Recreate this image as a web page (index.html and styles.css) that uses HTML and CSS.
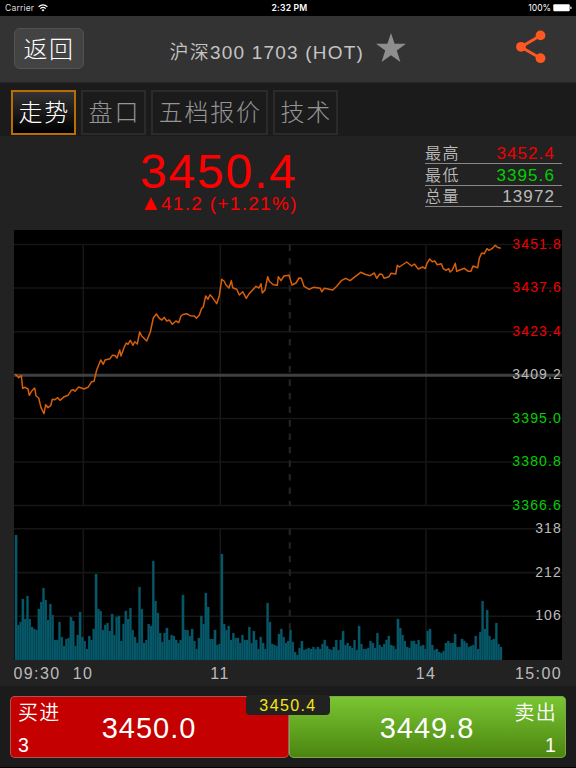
FILE: index.html
```html
<!DOCTYPE html>
<html lang="zh-CN">
<head>
    <meta charset="UTF-8">
    <title>沪深300 1703</title>
    <link rel="stylesheet" href="styles.css">
</head>
<body>
    <!-- Status Bar -->
    <div class="status-bar">
        <div class="status-left">
            <span>Carrier</span>
            <svg class="wifi" width="10" height="8" viewBox="0 0 10 8">
                <path d="M0.6 2.8 Q5 -1.2 9.4 2.8" />
                <path d="M2.3 4.6 Q5 2.2 7.7 4.6" />
                <path class="wifi-dot" d="M3.5 5.9 Q5 4.7 6.5 5.9 L5 7.6 Z" />
            </svg>
        </div>
        <div class="status-time">2:32 PM</div>
        <div class="status-right">
            <span>100%</span>
            <svg width="19" height="8" viewBox="0 0 19 8">
                <rect x="0.3" y="0.3" width="16.4" height="7" rx="1" fill="#fff" />
                <rect x="17.3" y="2.5" width="1.2" height="2.6" rx="0.5" fill="#fff" />
            </svg>
        </div>
    </div>

    <!-- Header -->
    <div class="header">
        <button class="back-btn">返回</button>
        <div class="title">沪深300 1703 (HOT)</div>
        <svg class="star" width="30" height="30" viewBox="0 0 30 30">
            <polygon points="15,0 18.6,10.8 30,10.8 20.8,17.6 24.4,29 15,22.2 5.6,29 9.2,17.6 0,10.8 11.4,10.8" />
        </svg>
        <svg class="share" width="30" height="34" viewBox="0 0 30 34">
            <path d="M24.5 5.5 L5 17 L24.5 28.3" />
            <circle cx="24.5" cy="5.4" r="4.9" />
            <circle cx="5" cy="16.8" r="4.9" />
            <circle cx="24.5" cy="28.2" r="4.9" />
        </svg>
    </div>

    <!-- Tabs -->
    <div class="tabs">
        <div class="tab active">走势</div>
        <div class="tab">盘口</div>
        <div class="tab">五档报价</div>
        <div class="tab">技术</div>
    </div>

    <div class="content">
        <div class="quote">
            <div class="quote-main">
                <div class="last-price">3450.4</div>
                <div class="change">
                    <svg width="14" height="13" viewBox="0 0 14 13"><polygon points="7,0 13.5,13 0.5,13" fill="#f00" /></svg>
                    <span>41.2 (+1.21%)</span>
                </div>
            </div>
            <div class="stats">
                <div class="stat"><span>最高</span><span class="value up">3452.4</span></div>
                <div class="stat"><span>最低</span><span class="value down">3395.6</span></div>
                <div class="stat"><span>总量</span><span class="value">13972</span></div>
            </div>
        </div>

        <svg id="chart" class="chart" width="548" height="456" viewBox="0 0 548 456"></svg>
    </div>

    <!-- Order Buttons -->
    <div class="orders">
        <div class="order buy">
            <span class="order-name">买进</span>
            <span class="order-price">3450.0</span>
            <span class="order-count">3</span>
        </div>
        <div class="order sell">
            <span class="order-name">卖出</span>
            <span class="order-price">3449.8</span>
            <span class="order-count">1</span>
        </div>
        <div class="deal-price">3450.4</div>
    </div>

    <script src="chart.js"></script>
</body>
</html>
```
FILE: styles.css
```css
* {
    box-sizing: border-box;
}
body {
    margin: 0;
    width: 576px;
    height: 768px;
    overflow: hidden;
    background-color: #1b1b1b;
    color: #bbb;
    font-family: "Liberation Sans", "Noto Sans CJK SC", sans-serif;
    display: flex;
    flex-direction: column;
}
/* Status bar */
.status-bar {
    height: 16px;
    flex: none;
    background-color: #000;
    color: #fff;
    display: grid;
    grid-template-columns: 1fr auto 1fr;
    align-items: center;
    padding: 0 4px 0 5px;
    font-family: Inter, sans-serif;
    font-size: 8.6px;
    line-height: 16px;
}
.status-left {
    display: flex;
    align-items: center;
    gap: 4px;
    color: #ddd;
    letter-spacing: 0.15px;
}
.status-time {
    font-weight: 600;
    letter-spacing: 0.2px;
    padding-left: 2px;
}
.status-right {
    display: flex;
    align-items: center;
    justify-content: flex-end;
    gap: 2px;
}
.wifi path {
    fill: none;
    stroke: #fff;
    stroke-width: 1.2;
}
.wifi .wifi-dot {
    fill: #fff;
    stroke: none;
}
/* Header */
.header {
    height: 66px;
    flex: none;
    background-color: #333;
    display: flex;
    align-items: center;
    padding: 0 30px 0 14px;
}
.back-btn {
    width: 70px;
    height: 41px;
    margin-top: -1px;
    padding: 0;
    background-color: #434343;
    border: 1px solid #525252;
    border-radius: 6px;
    color: #fff;
    font-family: inherit;
    font-weight: 300;
    font-size: 24px;
    letter-spacing: 1.5px;
    line-height: 41px;
}
.title {
    margin: 3px 0 0 85.5px;
    width: 206px;
    white-space: nowrap;
    font-size: 19px;
    font-weight: 350;
    letter-spacing: 1.2px;
    color: #c4c4c4;
}
.star {
    fill: #8e8e8e;
    margin-top: -2px;
}
.share {
    margin-left: auto;
    margin-top: -4px;
    fill: #ff5722;
}
.share path {
    fill: none;
    stroke: #ff5722;
    stroke-width: 3;
}
/* Tabs */
.tabs {
    height: 54px;
    flex: none;
    display: flex;
    gap: 5px;
    padding: 7px 11px 0;
    border-top: 1px solid #252525;
}
.tab {
    height: 45px;
    border: 2px solid #2b2b2b;
    padding: 0 4px 0 5.5px;
    font-size: 24px;
    font-weight: 300;
    letter-spacing: 1.8px;
    line-height: 42px;
    color: #959595;
}
.tab.active {
    border-color: #b96d05;
    background: linear-gradient(#333, #000);
    color: #fff;
}
/* Quote */
.content {
    height: 550px;
    flex: none;
    background-color: #222;
    padding: 0 14px;
}
.quote {
    height: 94px;
    display: flex;
    justify-content: space-between;
}
.quote-main {
    padding: 14px 0 0 126px;
    color: #f00;
}
.last-price {
    font-size: 48px;
    line-height: 44px;
    letter-spacing: 1.8px;
}
.change {
    display: flex;
    align-items: center;
    gap: 3px;
    padding-left: 4px;
    font-size: 19px;
    line-height: 19px;
    letter-spacing: 1.3px;
    white-space: nowrap;
}
.stats {
    width: 137px;
    padding-top: 6.5px;
}
.stat {
    display: flex;
    justify-content: space-between;
    align-items: center;
    height: 21.5px;
    padding: 3px 7px 0 0;
    border-bottom: 1px solid #888;
    font-size: 16px;
    font-weight: 350;
    letter-spacing: 1.4px;
    line-height: 18px;
}
.stat .value {
    font-size: 17px;
    letter-spacing: 1.1px;
}
.up {
    color: #f00000;
}
.down {
    color: #00d000;
}
/* Chart */
.chart {
    display: block;
}
.chart .area {
    fill: #000;
}
.chart .grid {
    stroke: #161616;
    stroke-width: 1.6;
    fill: none;
}
.chart .noon {
    stroke: #222;
    stroke-width: 2.2;
    stroke-dasharray: 6.5 7;
}
.chart .base {
    stroke: #404040;
    stroke-width: 3;
}
.chart .price {
    fill: none;
    stroke: #d85f0a;
    stroke-width: 1.5;
    stroke-linejoin: round;
}
.chart .volume {
    fill: #07596a;
    stroke: #044452;
    stroke-width: 0.3;
}
.chart text {
    font-size: 14px;
    letter-spacing: 1.15px;
    fill: #bbb;
}
.chart .label-up {
    fill: #f00000;
}
.chart .label-down {
    fill: #00d000;
}
.chart .label-time {
    font-size: 16px;
    letter-spacing: 1.4px;
}
/* Order buttons */
.orders {
    position: relative;
    flex: 1;
    display: flex;
    padding: 10px 10px 9px;
    border-bottom: 1px solid #000;
}
.order {
    flex: 1;
    display: grid;
    grid-template-columns: 50px 1fr 50px;
    grid-template-rows: 31px 31px;
    height: 62px;
    border-radius: 5px;
    color: #fff;
    font-size: 19.5px;
    line-height: 34px;
    letter-spacing: 1.2px;
}
.buy {
    flex: none;
    width: 279px;
    background-color: #c40000;
    box-shadow: inset 0 0 0 1px #a55;
    padding: 0 9px 0 8px;
}
.sell {
    background: linear-gradient(#7bc733, #4b840f);
    box-shadow: inset 0 0 0 1px #7ba84f;
    padding: 0 9px 0 8px;
    text-align: right;
}
.order-name {
    font-size: 20px;
    font-weight: 350;
    letter-spacing: 1.2px;
    white-space: nowrap;
}
.order-price {
    grid-column: 2;
    grid-row: 1 / 3;
    font-size: 29px;
    line-height: 65px;
    letter-spacing: 1px;
    text-align: center;
}
.order-count {
    grid-row: 2;
    line-height: 37px;
}
.buy .order-name, .buy .order-count {
    grid-column: 1;
}
.sell .order-name, .sell .order-count {
    grid-column: 3;
}
.deal-price {
    position: absolute;
    left: 246px;
    top: 9px;
    width: 84px;
    height: 20px;
    border-radius: 4px;
    background-color: #222;
    color: #f5e616;
    font-size: 16px;
    line-height: 22px;
    letter-spacing: 1.4px;
    text-align: center;
}
```
FILE: chart.js
```js
const chart = document.getElementById('chart');

const WIDTH = 548;
const BOTTOM = 430;
const MINUTE = 2.287;

const levels = [
    { y: 14.5, text: '3451.8', cls: 'label-up' },
    { y: 58, text: '3437.6', cls: 'label-up' },
    { y: 101.7, text: '3423.4', cls: 'label-up' },
    { y: 145.2, text: '3409.2', cls: '' },
    { y: 188.5, text: '3395.0', cls: 'label-down' },
    { y: 232, text: '3380.8', cls: 'label-down' },
    { y: 275.5, text: '3366.6', cls: 'label-down' },
    { y: 298.7, text: '318', cls: '' },
    { y: 342.6, text: '212', cls: '' },
    { y: 386.3, text: '106', cls: '' }
];

const hours = [69.3, 206.3, 412];

const price = [
    1.3,144, 4.7,147.7, 7.3,145.7, 8.7,158.3, 11,157.3, 14,159, 15.3,165.3, 17.7,161, 20.7,158, 22,165.7,
    24.7,168, 27,177.7, 30,183.7, 31.7,174.7, 34,177.7, 36.7,175.7, 38.3,169.3, 41,169.7, 43.7,167.7, 46,170.3,
    50.3,166.7, 54,165.3, 57.3,160.3, 59.3,159.7, 61,161.3, 64.7,157, 70,159, 74,157.3, 77.7,151.7, 80,151.3,
    82.7,140, 86.7,130, 89.3,134.3, 91,130, 96,128.7, 98.3,125.3, 101,125.5, 103,128, 105.7,120, 107,126,
    110,117.7, 112.3,113, 114,114.3, 116.3,110.3, 119,115.3, 120.7,111.7, 123.3,114, 125.7,102, 127.7,106, 132.7,111,
    136.3,102, 139.3,88, 142.3,84, 145.3,88.3, 148,90, 150.3,87.3, 152.7,91, 155.3,90, 158.3,94.3, 162,91,
    164.7,92.7, 167,86, 169,84.5, 172.7,83.7, 176,85.7, 180.3,86, 182.5,88.3, 185.3,85, 187.7,78.3, 189.3,77,
    191.7,66, 194,69.3, 196,64.7, 198.3,67.3, 202.7,73.7, 205.3,65.7, 207.7,49.3, 210,51, 212,55, 215,58,
    217.3,50.7, 218.7,57.7, 222.7,59.3, 225.3,65, 228.7,61.7, 232.3,68.3, 234.7,64.3, 242,56.3, 245,58, 247,53.7,
    248.3,63, 251,60, 253.7,46.7, 255.3,51.3, 259.3,54.7, 263.3,55.3, 264.3,46.7, 267,50.7, 270,46, 275,45.3,
    278,55, 282,53, 285,48, 287.3,48.3, 290,56.3, 295.3,59.3, 299.3,57.3, 306.3,58.3, 307.7,61.7, 310.3,58.3,
    318.7,60, 322.7,56.3, 327.7,50.3, 331.7,48.3, 336,50.7, 346.7,42.3, 351,44.3, 356,45.7, 360.3,43, 362.7,48.3,
    365.7,44, 368.3,44.5, 370,48.3, 375,46.7, 377,43.3, 381.7,44, 383.3,35.3, 385.3,37, 392.7,32, 397.7,36,
    400.3,34, 404.3,39, 408.7,37, 411.3,38.7, 413,33.3, 415.7,29, 418.3,31.7, 420.7,31, 423.3,34.7, 427.3,33.7,
    429.3,38.7, 432,40.3, 434.7,38.7, 436,42, 438.3,40, 441.3,33.3, 442.7,41.3, 450.3,38.3, 454.3,41.3, 457,41.3,
    459,36, 463.7,37.7, 465.3,28.3, 467.7,23, 470.3,23.7, 473,18.7, 475,20.3, 478,18.7, 481.3,15.3, 483.3,17.3,
    486.7,18.3
];

// bar heights, one per minute
const volume = [
    125, 35, 38, 61, 41, 64, 41, 33, 31, 30, 51, 58, 72, 60, 40, 56, 45, 20, 20, 38,
    23, 14, 21, 22, 43, 39, 14, 25, 48, 23, 19, 11, 24, 20, 31, 86, 51, 49, 30, 35,
    37, 29, 46, 25, 43, 44, 19, 36, 49, 41, 52, 30, 23, 17, 73, 51, 17, 20, 36, 34,
    99, 59, 47, 27, 18, 27, 32, 20, 25, 24, 20, 17, 20, 65, 30, 30, 24, 31, 19, 11,
    22, 44, 36, 67, 53, 21, 21, 30, 15, 16, 106, 36, 30, 34, 20, 27, 22, 22, 17, 25,
    20, 20, 33, 17, 29, 20, 11, 23, 17, 11, 57, 38, 16, 15, 14, 26, 31, 23, 17, 19,
    30, 18, 8, 5, 12, 19, 10, 11, 12, 11, 13, 11, 13, 11, 16, 20, 14, 11, 10, 13,
    20, 10, 20, 29, 15, 17, 14, 12, 20, 10, 34, 16, 11, 11, 12, 19, 17, 12, 27, 15,
    13, 16, 20, 24, 15, 14, 11, 41, 32, 25, 19, 13, 12, 19, 19, 16, 20, 14, 15, 11,
    29, 31, 15, 10, 11, 8, 7, 9, 17, 19, 17, 17, 26, 13, 13, 21, 19, 17, 13, 14,
    15, 24, 11, 28, 59, 31, 50, 24, 20, 21, 37, 16, 13
];

let html = `<rect class="area" width="${WIDTH}" height="${BOTTOM}" />`;

// grid
levels.forEach(level => {
    html += `<line class="grid" x1="0" x2="${WIDTH}" y1="${level.y}" y2="${level.y}" />`;
});
hours.forEach(x => {
    html += `<path class="grid" d="M${x} 14.5V275.5M${x} 298.7V${BOTTOM}" />`;
});
html += `<path class="noon" d="M275.8 14.5V275.5M275.8 298.7V${BOTTOM}" />`;
html += `<line class="base" x1="0" x2="${WIDTH}" y1="145.2" y2="145.2" />`;

// volume bars
volume.forEach((h, i) => {
    const x = 0.9 + i * MINUTE;
    html += `<rect class="volume" x="${x.toFixed(2)}" y="${BOTTOM - h}" width="${MINUTE}" height="${h}" />`;
});

html += `<polyline class="price" points="${price.join(' ')}" />`;

// labels
levels.forEach(level => {
    html += `<text class="${level.cls}" x="548" y="${level.y + 4}" text-anchor="end">${level.text}</text>`;
});
html += `<text class="label-time" x="-0.5" y="449">09:30</text>`;
html += `<text class="label-time" x="69" y="449" text-anchor="middle">10</text>`;
html += `<text class="label-time" x="206" y="449" text-anchor="middle">11</text>`;
html += `<text class="label-time" x="412" y="449" text-anchor="middle">14</text>`;
html += `<text class="label-time" x="548" y="449" text-anchor="end">15:00</text>`;

chart.innerHTML = html;
```
